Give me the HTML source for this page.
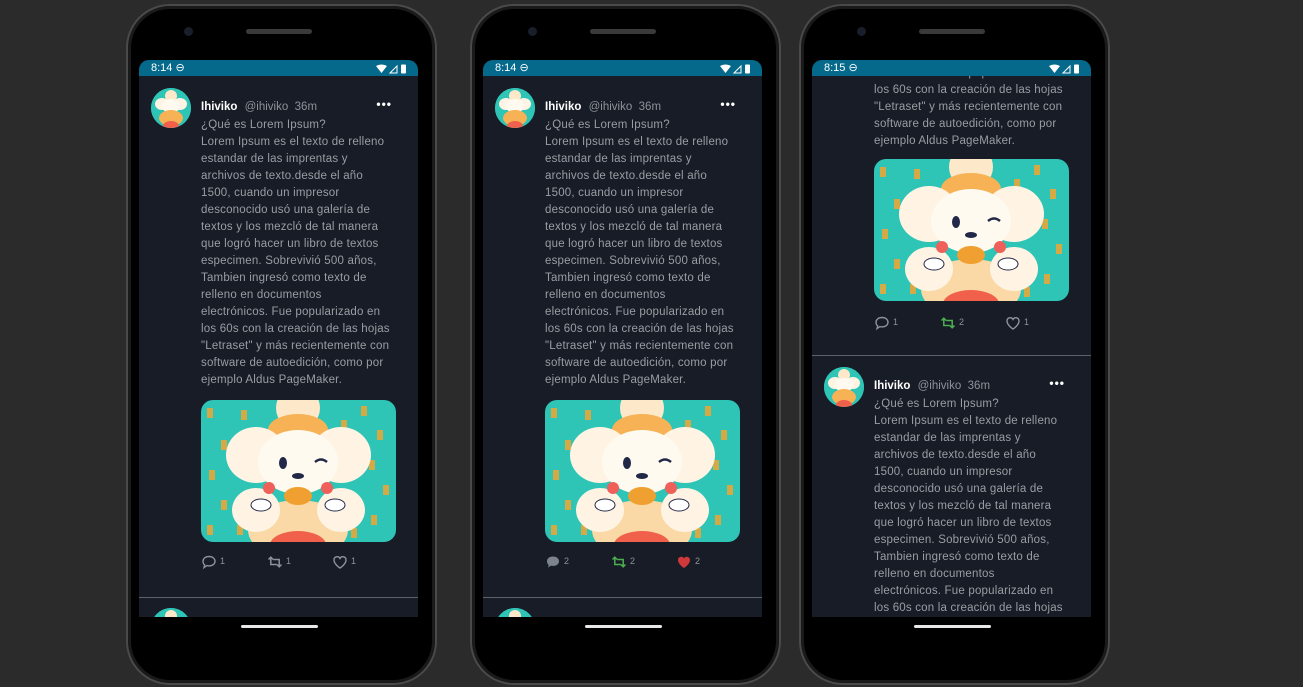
<!DOCTYPE html>
<html><head><meta charset="utf-8"><style>
*{margin:0;padding:0;box-sizing:border-box}
body{width:1303px;height:687px;background:#2b2b2b;position:relative;overflow:hidden;font-family:"Liberation Sans",Roboto,sans-serif}
.phone{position:absolute;top:4px;width:311px;height:681px;border-radius:44px;background:#000;border:2px solid #4a4a4a;box-shadow:inset 0 0 0 3px #1a1a1a}
.cam{position:absolute;top:21px;left:56px;width:9px;height:9px;border-radius:50%;background:#1a1d2a}
.spk{position:absolute;top:23px;left:118px;width:66px;height:5px;border-radius:3px;background:#3a3a3a}
.screen{position:absolute;top:54px;left:11px;width:279px;height:557px;background:#171c26;border-radius:10px 10px 0 0;overflow:hidden}
.sb{position:absolute;top:0;left:0;right:0;height:16px;background:#05698c;color:#fff;font-size:11px;line-height:16px;padding-left:12px;z-index:5}
.sb .r{position:absolute;right:10px;top:3px}
.pill{position:absolute;top:619px;left:113px;width:77px;height:3px;border-radius:2px;background:#e8e8e8}
.cont{position:absolute;left:0;top:0;width:279px;height:1200px}
.tw{position:absolute;left:0;width:279px;height:520px}
.av{position:absolute;left:12px;top:12px;width:40px;height:40px;border-radius:50%;overflow:hidden;background:#2ec4b6}
.hd{position:absolute;left:62px;top:23px;font-size:11.5px;line-height:17px;color:#8e9299;white-space:nowrap}
.hd b{color:#fff;margin-right:4px}
.dots{position:absolute;right:26px;top:21px;color:#fff;font-size:12px;font-weight:bold;letter-spacing:1px}
.tx{position:absolute;left:62px;top:41px;font-size:11.5px;line-height:17px;color:#9a9ea4;white-space:nowrap;letter-spacing:.2px}
.img{position:absolute;left:62px;top:324px;width:195px;height:142px;border-radius:12px;overflow:hidden}
.act{position:absolute;top:478px;left:62px;width:200px;height:16px;font-size:9px;color:#8e9299}
.act span{position:absolute;top:2px}
.act svg{position:absolute;top:0}
.sep{position:absolute;left:0;right:0;height:1px;background:#5c616a}
</style></head><body>
<svg width="0" height="0" style="position:absolute">
<defs>
<symbol id="pic" viewBox="0 0 195 142">
<rect width="195" height="142" fill="#2ec4b6"/>
<g fill="#e7a83a" opacity=".9">
<rect x="6" y="8" width="6" height="10"/><rect x="20" y="40" width="6" height="10"/><rect x="8" y="70" width="6" height="10"/><rect x="20" y="100" width="6" height="10"/><rect x="6" y="125" width="6" height="10"/>
<rect x="160" y="6" width="6" height="10"/><rect x="176" y="30" width="6" height="10"/><rect x="168" y="60" width="6" height="10"/><rect x="182" y="85" width="6" height="10"/><rect x="170" y="115" width="6" height="10"/>
<rect x="40" y="10" width="6" height="10"/><rect x="140" y="20" width="6" height="10"/><rect x="36" y="125" width="6" height="10"/><rect x="150" y="128" width="6" height="10"/>
</g>
<circle cx="97" cy="8" r="22" fill="#fde9c9"/>
<ellipse cx="97" cy="30" rx="30" ry="16" fill="#f6b255"/>
<ellipse cx="55" cy="55" rx="30" ry="28" fill="#fff4e4"/>
<ellipse cx="140" cy="55" rx="30" ry="28" fill="#fff4e4"/>
<ellipse cx="97" cy="62" rx="40" ry="32" fill="#fffaf0"/>
<ellipse cx="97" cy="130" rx="50" ry="30" fill="#fbd9a6"/>
<ellipse cx="55" cy="110" rx="24" ry="22" fill="#fff4e4"/>
<ellipse cx="140" cy="110" rx="24" ry="22" fill="#fff4e4"/>
<ellipse cx="97" cy="145" rx="28" ry="14" fill="#f0604a"/>
<ellipse cx="82" cy="63" rx="4" ry="6" fill="#222848"/>
<path d="M114 62 q6 -5 12 0" stroke="#222848" stroke-width="2.5" fill="none"/>
<ellipse cx="97" cy="76" rx="6" ry="3" fill="#222848"/>
<circle cx="68" cy="88" r="6" fill="#f0605a"/><circle cx="126" cy="88" r="6" fill="#f0605a"/>
<ellipse cx="97" cy="96" rx="14" ry="9" fill="#f0a030"/>
<ellipse cx="60" cy="105" rx="10" ry="6" fill="#fff" stroke="#222848" stroke-width="1"/>
<ellipse cx="134" cy="105" rx="10" ry="6" fill="#fff" stroke="#222848" stroke-width="1"/>
</symbol>
<symbol id="ava" viewBox="0 0 40 40">
<rect width="40" height="40" fill="#2ec4b6"/>
<circle cx="20" cy="8" r="6" fill="#fde9c9"/>
<ellipse cx="11" cy="16" rx="7" ry="6" fill="#fff4e4"/><ellipse cx="29" cy="16" rx="7" ry="6" fill="#fff4e4"/>
<ellipse cx="20" cy="18" rx="9" ry="7" fill="#fffaf0"/>
<ellipse cx="20" cy="30" rx="12" ry="8" fill="#f6b255"/>
<ellipse cx="20" cy="38" rx="8" ry="5" fill="#f0604a"/>
</symbol>
<symbol id="cm" viewBox="0 0 16 16"><path d="M8 2.5c3.6 0 6 2.1 6 4.7s-2.4 4.7-6 4.7c-.8 0-1.5-.1-2.1-.3L3 13.6l.7-2.6C2.6 10.1 2 8.8 2 7.2 2 4.6 4.4 2.5 8 2.5z" fill="none" stroke="currentColor" stroke-width="1.4"/></symbol>
<symbol id="cmf" viewBox="0 0 16 16"><path d="M8 2.5c3.6 0 6 2.1 6 4.7s-2.4 4.7-6 4.7c-.8 0-1.5-.1-2.1-.3L3 13.6l.7-2.6C2.6 10.1 2 8.8 2 7.2 2 4.6 4.4 2.5 8 2.5z" fill="currentColor"/></symbol>
<symbol id="rt" viewBox="0 0 16 16"><path d="M1.5 5.5l2.3-2.3 2.3 2.3M3.8 3.5v7h6M14.5 10.5l-2.3 2.3-2.3-2.3M12.2 12.5v-7h-6" fill="none" stroke="currentColor" stroke-width="1.5"/></symbol>
<symbol id="ht" viewBox="0 0 16 16"><path d="M8 14s-6-3.8-6-8a3.2 3.2 0 0 1 6-1.6A3.2 3.2 0 0 1 14 6c0 4.2-6 8-6 8z" fill="none" stroke="currentColor" stroke-width="1.4"/></symbol>
<symbol id="htf" viewBox="0 0 16 16"><path d="M8 14s-6-3.8-6-8a3.2 3.2 0 0 1 6-1.6A3.2 3.2 0 0 1 14 6c0 4.2-6 8-6 8z" fill="currentColor"/></symbol>
</defs></svg>

<!-- PHONE 1 -->
<div class="phone" style="left:126px">
<div class="cam"></div><div class="spk"></div>
<div class="screen">
<div class="sb">8:14 ⊖<span class="r"><svg width="32" height="10" viewBox="0 0 32 10"><path d="M0 2 Q5.5 -1 11 2 L5.5 9z" fill="#fff"/><path d="M14 9 L21 2 V9z" fill="none" stroke="#fff" stroke-width="1"/><rect x="25" y="0.5" width="5" height="9" rx="1" fill="#fff"/></svg></span></div>
<div class="cont">
<div class="tw" style="top:16px">
<div class="av"><svg width="40" height="40"><use href="#ava"/></svg></div>
<div class="hd"><b>Ihiviko</b> @ihiviko&nbsp; 36m</div><div class="dots">•••</div>
<div class="tx">¿Qué es Lorem Ipsum?<br>Lorem Ipsum es el texto de relleno<br>estandar de las imprentas y<br>archivos de texto.desde el año<br>1500, cuando un impresor<br>desconocido usó una galería de<br>textos y los mezcló de tal manera<br>que logró hacer un libro de textos<br>especimen. Sobrevivió 500 años,<br>Tambien ingresó como texto de<br>relleno en documentos<br>electrónicos. Fue popularizado en<br>los 60s con la creación de las hojas<br>"Letraset" y más recientemente con<br>software de autoedición, como por<br>ejemplo Aldus PageMaker.</div>
<div class="img"><svg width="195" height="142"><use href="#pic"/></svg></div>
<div class="act">
<svg width="16" height="16" style="left:0;color:#8e9299"><use href="#cm"/></svg><span style="left:19px">1</span>
<svg width="16" height="16" style="left:66px;color:#8e9299"><use href="#rt"/></svg><span style="left:85px">1</span>
<svg width="16" height="16" style="left:131px;color:#8e9299"><use href="#ht"/></svg><span style="left:150px">1</span>
</div>
</div>
<div class="sep" style="top:537px"></div>
<div class="tw" style="top:536px"><div class="av"><svg width="40" height="40"><use href="#ava"/></svg></div></div>
</div></div>
<div class="pill"></div>
</div>

<!-- PHONE 2 -->
<div class="phone" style="left:470px">
<div class="cam"></div><div class="spk"></div>
<div class="screen" style="left:11px">
<div class="sb">8:14 ⊖<span class="r"><svg width="32" height="10" viewBox="0 0 32 10"><path d="M0 2 Q5.5 -1 11 2 L5.5 9z" fill="#fff"/><path d="M14 9 L21 2 V9z" fill="none" stroke="#fff" stroke-width="1"/><rect x="25" y="0.5" width="5" height="9" rx="1" fill="#fff"/></svg></span></div>
<div class="cont">
<div class="tw" style="top:16px">
<div class="av"><svg width="40" height="40"><use href="#ava"/></svg></div>
<div class="hd"><b>Ihiviko</b> @ihiviko&nbsp; 36m</div><div class="dots">•••</div>
<div class="tx">¿Qué es Lorem Ipsum?<br>Lorem Ipsum es el texto de relleno<br>estandar de las imprentas y<br>archivos de texto.desde el año<br>1500, cuando un impresor<br>desconocido usó una galería de<br>textos y los mezcló de tal manera<br>que logró hacer un libro de textos<br>especimen. Sobrevivió 500 años,<br>Tambien ingresó como texto de<br>relleno en documentos<br>electrónicos. Fue popularizado en<br>los 60s con la creación de las hojas<br>"Letraset" y más recientemente con<br>software de autoedición, como por<br>ejemplo Aldus PageMaker.</div>
<div class="img"><svg width="195" height="142"><use href="#pic"/></svg></div>
<div class="act">
<svg width="16" height="16" style="left:0;color:#7c838d"><use href="#cmf"/></svg><span style="left:19px">2</span>
<svg width="16" height="16" style="left:66px;color:#4caf50"><use href="#rt"/></svg><span style="left:85px">2</span>
<svg width="16" height="16" style="left:131px;color:#d0393b"><use href="#htf"/></svg><span style="left:150px">2</span>
</div>
</div>
<div class="sep" style="top:537px"></div>
<div class="tw" style="top:536px"><div class="av"><svg width="40" height="40"><use href="#ava"/></svg></div></div>
</div></div>
<div class="pill"></div>
</div>

<!-- PHONE 3 -->
<div class="phone" style="left:799px">
<div class="cam"></div><div class="spk"></div>
<div class="screen" style="left:11px">
<div class="sb">8:15 ⊖<span class="r"><svg width="32" height="10" viewBox="0 0 32 10"><path d="M0 2 Q5.5 -1 11 2 L5.5 9z" fill="#fff"/><path d="M14 9 L21 2 V9z" fill="none" stroke="#fff" stroke-width="1"/><rect x="25" y="0.5" width="5" height="9" rx="1" fill="#fff"/></svg></span></div>
<div class="cont" style="top:-239px">
<div class="tw" style="top:16px">
<div class="av"><svg width="40" height="40"><use href="#ava"/></svg></div>
<div class="hd"><b>Ihiviko</b> @ihiviko&nbsp; 36m</div><div class="dots">•••</div>
<div class="tx">¿Qué es Lorem Ipsum?<br>Lorem Ipsum es el texto de relleno<br>estandar de las imprentas y<br>archivos de texto.desde el año<br>1500, cuando un impresor<br>desconocido usó una galería de<br>textos y los mezcló de tal manera<br>que logró hacer un libro de textos<br>especimen. Sobrevivió 500 años,<br>Tambien ingresó como texto de<br>relleno en documentos<br>electrónicos. Fue popularizado en<br>los 60s con la creación de las hojas<br>"Letraset" y más recientemente con<br>software de autoedición, como por<br>ejemplo Aldus PageMaker.</div>
<div class="img" style="top:322px"><svg width="195" height="142"><use href="#pic"/></svg></div>
<div class="act">
<svg width="16" height="16" style="left:0;color:#8e9299"><use href="#cm"/></svg><span style="left:19px">1</span>
<svg width="16" height="16" style="left:66px;color:#4caf50"><use href="#rt"/></svg><span style="left:85px">2</span>
<svg width="16" height="16" style="left:131px;color:#8e9299"><use href="#ht"/></svg><span style="left:150px">1</span>
</div>
</div>
<div class="sep" style="top:534px"></div>
<div class="tw" style="top:534px">
<div class="av"><svg width="40" height="40"><use href="#ava"/></svg></div>
<div class="hd"><b>Ihiviko</b> @ihiviko&nbsp; 36m</div><div class="dots">•••</div>
<div class="tx">¿Qué es Lorem Ipsum?<br>Lorem Ipsum es el texto de relleno<br>estandar de las imprentas y<br>archivos de texto.desde el año<br>1500, cuando un impresor<br>desconocido usó una galería de<br>textos y los mezcló de tal manera<br>que logró hacer un libro de textos<br>especimen. Sobrevivió 500 años,<br>Tambien ingresó como texto de<br>relleno en documentos<br>electrónicos. Fue popularizado en<br>los 60s con la creación de las hojas<br>"Letraset" y más recientemente con</div>
</div>
</div></div>
<div class="pill"></div>
</div>
</body></html>
